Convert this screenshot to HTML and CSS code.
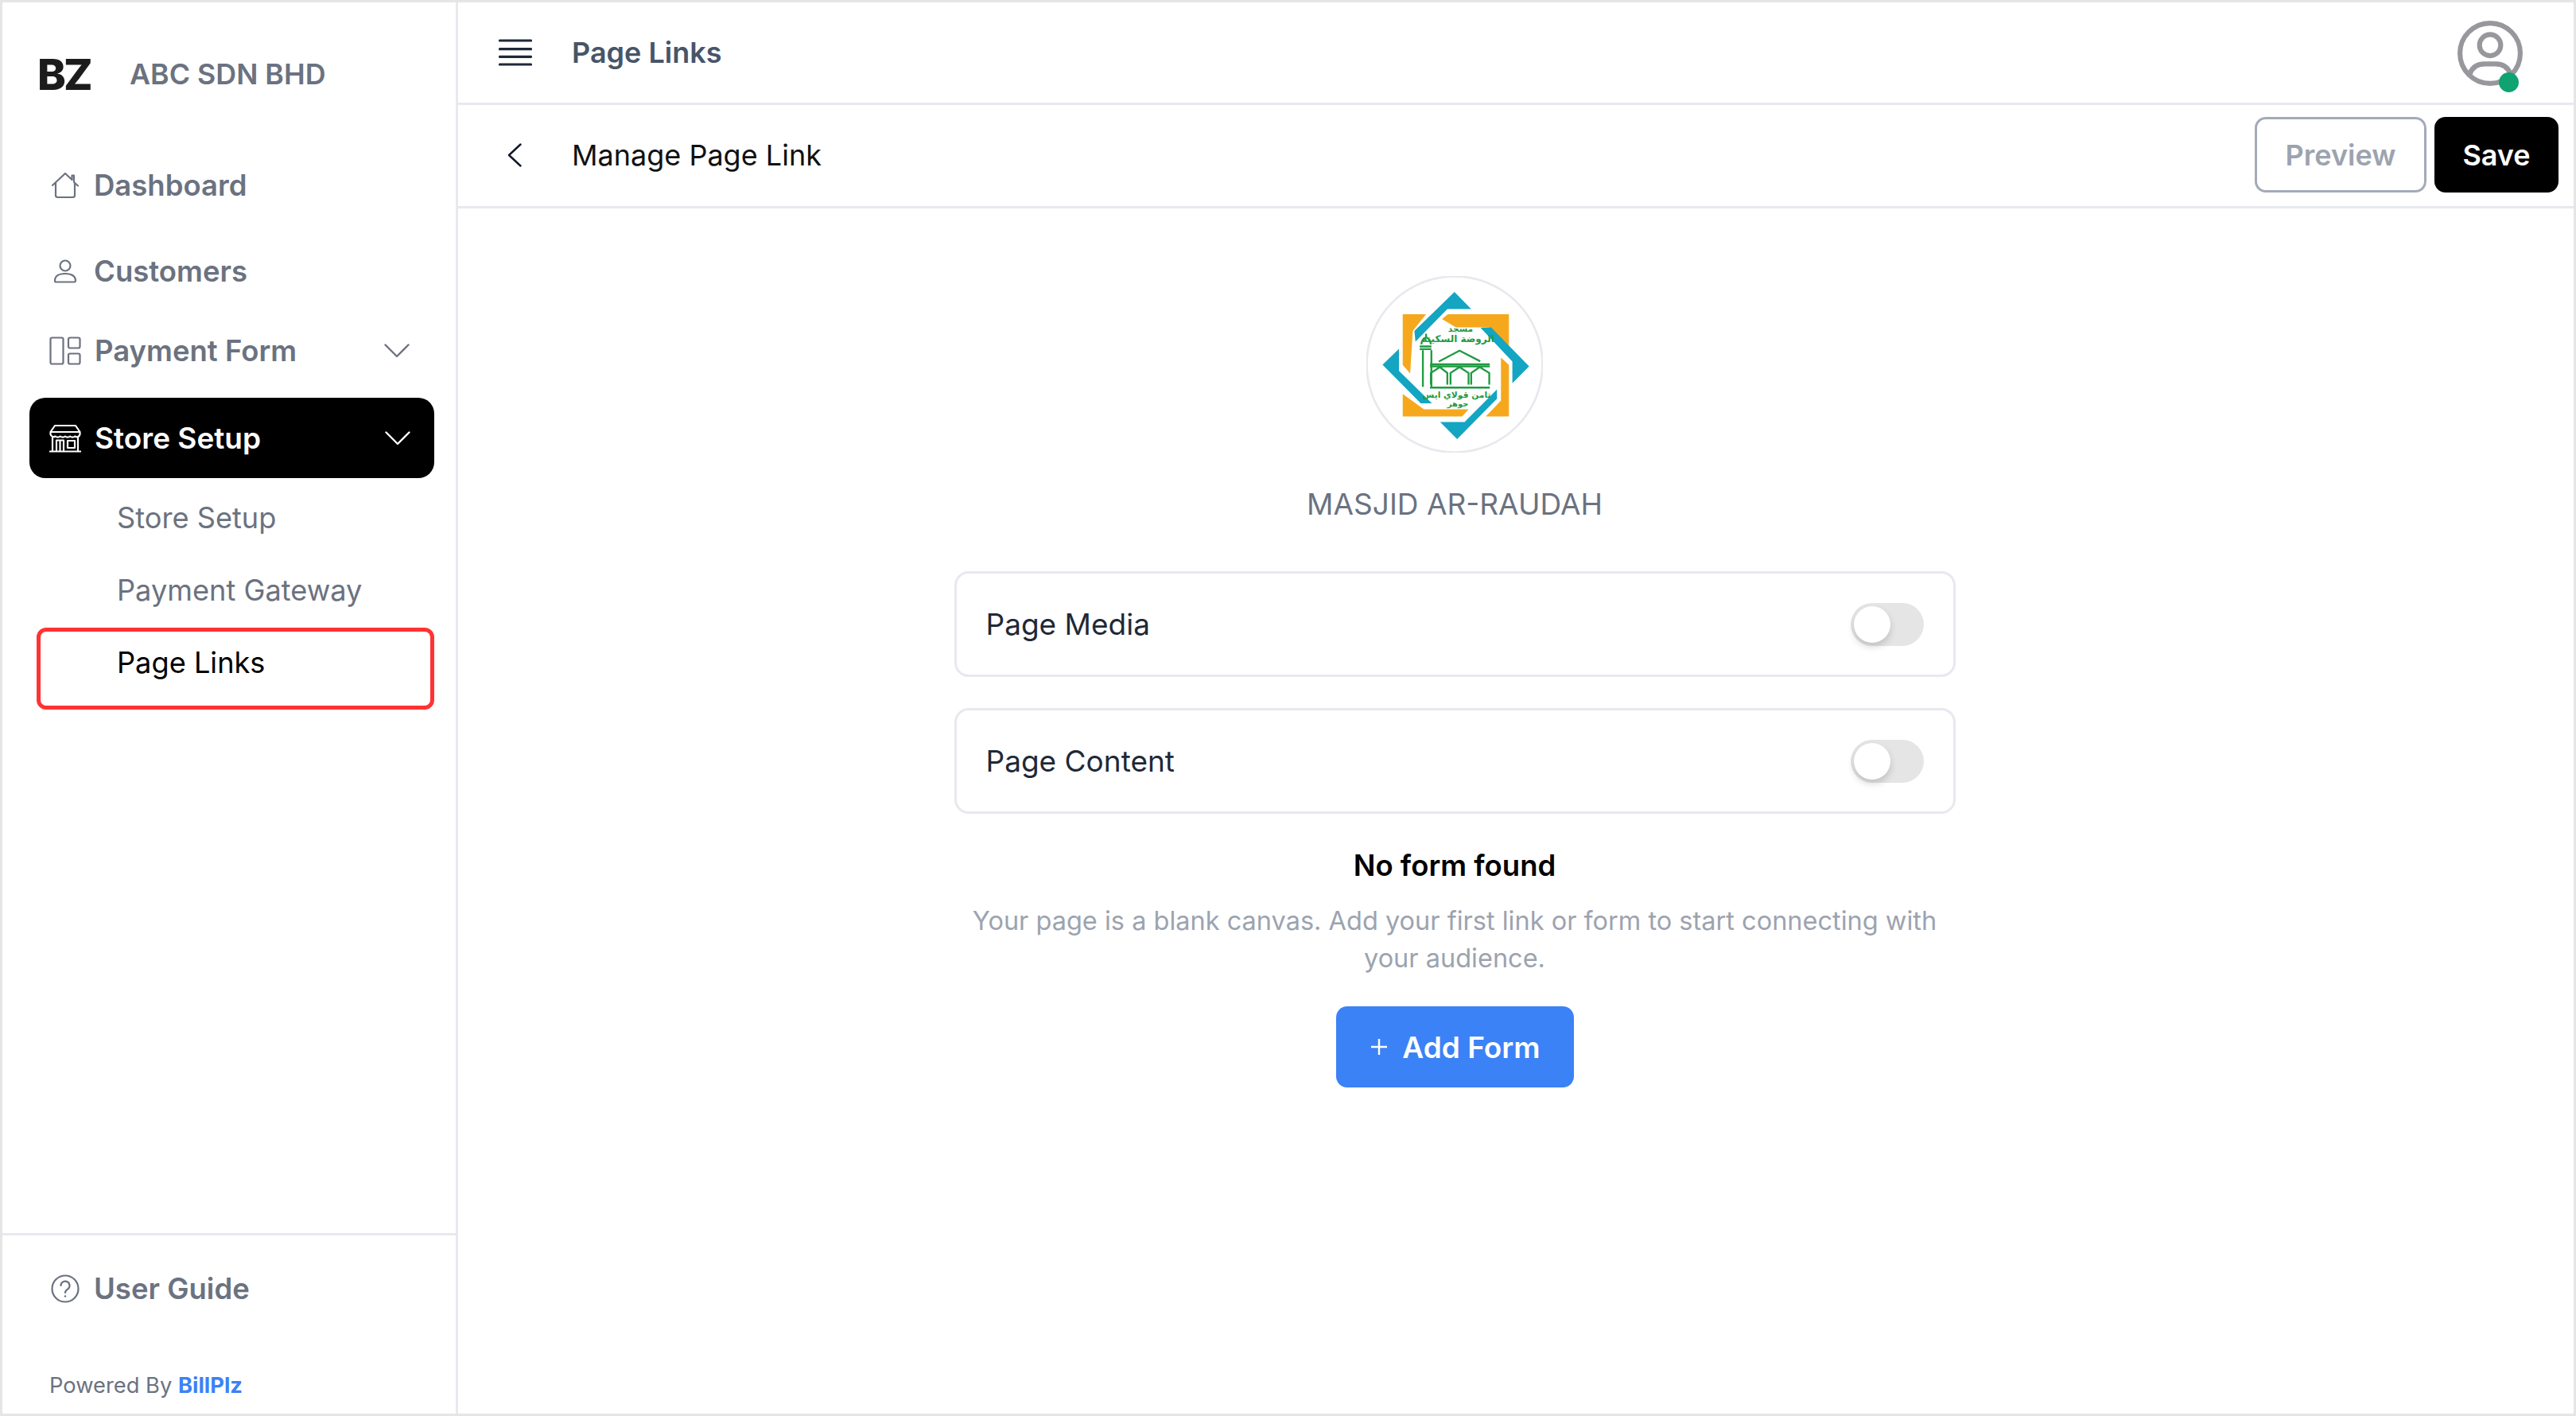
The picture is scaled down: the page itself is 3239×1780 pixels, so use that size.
FILE: index.html
```html
<!DOCTYPE html>
<html lang="en">
<head>
<meta charset="utf-8">
<title>Page Links</title>
<link rel="stylesheet" href="styles.css">
</head>
<body>
<div class="frame">
  <aside class="sidebar">
    <div class="brand"><span class="brand-mark">BZ</span><span class="brand-name">ABC SDN BHD</span></div>
    <nav class="nav">
      <a class="nav-item nav-dashboard">
        <svg class="ico" viewBox="0 0 36 36"><path d="M2 18 18 3l8.500 8V5.500h2.500v8.500L34 18.500M6 15v15.500a2.500 2.500 0 0 0 2.500 2.500h19a2.500 2.500 0 0 0 2.500-2.500V15"/></svg>
        <span>Dashboard</span>
      </a>
      <a class="nav-item nav-customers">
        <svg class="ico" viewBox="0 0 36 36"><circle cx="18" cy="11" r="6.500"/><path d="M5 30c0-6 5-9 13-9s13 3 13 9a1.500 1.500 0 0 1-1.500 1.500h-23A1.500 1.500 0 0 1 5 30z"/></svg>
        <span>Customers</span>
      </a>
      <a class="nav-item nav-form">
        <svg class="ico ico-wide" viewBox="0 0 40 36"><rect x="1.500" y="1.500" width="16" height="33" rx="2"/><rect x="24" y="1.500" width="14.500" height="13" rx="2"/><rect x="24" y="21.500" width="14.500" height="13" rx="2"/></svg>
        <span>Payment Form</span>
        <svg class="chev" viewBox="0 0 32 18"><path d="M1.500 1.500 16 16 30.500 1.500"/></svg>
      </a>
      <a class="nav-item nav-active">
        <svg class="ico ico-wide" viewBox="0 0 40 36"><path d="M7 2h26l5.500 8v3a4 4 0 0 1-6.200 2.500 5 5 0 0 1-6.200 0 5 5 0 0 1-6.100 0 5 5 0 0 1-6.200 0 5 5 0 0 1-6.200 0A4 4 0 0 1 1.500 13v-3zM1.500 10h37M4 17v17M36 17v17M0 34.500h40M9 34V20.500h9V34M13.500 20.500V34M23 21h9v9h-9z"/></svg>
        <span>Store Setup</span>
        <svg class="chev" viewBox="0 0 32 18"><path d="M1.500 1.500 16 16 30.500 1.500"/></svg>
      </a>
      <a class="sub-item sub-first">Store Setup</a>
      <a class="sub-item">Payment Gateway</a>
      <a class="sub-item sub-current">Page Links<span class="callout"></span></a>
    </nav>
    <div class="side-foot">
      <a class="nav-item guide">
        <svg class="ico" viewBox="0 0 36 36"><circle cx="18" cy="18" r="16.500"/><path d="M12.500 14a5.500 5.500 0 1 1 8.500 4.700c-2 1.300-3 2.100-3 4.300"/><circle class="dot" cx="18" cy="27.500" r="1.300"/></svg>
        <span>User Guide</span>
      </a>
      <div class="powered">Powered By <b>BillPlz</b></div>
    </div>
  </aside>
  <main class="main">
    <header class="topbar">
      <svg class="burger" viewBox="0 0 42 34"><path d="M1.500 2h39M1.500 12.700h39M1.500 22.300h39M1.500 32h39"/></svg>
      <h1 class="page-title">Page Links</h1>
      <div class="avatar">
        <svg viewBox="0 0 80 80"><circle cx="40" cy="40" r="37"/><circle cx="40" cy="30" r="13"/><path d="M15 66c3-10 10-13 18-13h14c8 0 15 3 18 13"/></svg>
        <span class="status"></span>
      </div>
    </header>
    <div class="subbar">
      <svg class="back" viewBox="0 0 20 30"><path d="M17.500 1.500 3 15l14.500 13.500"/></svg>
      <h2 class="sub-title">Manage Page Link</h2>
      <div class="actions">
        <button class="btn btn-ghost">Preview</button>
        <button class="btn btn-dark">Save</button>
      </div>
    </div>
    <section class="content">
      <svg class="org-logo" viewBox="115 83 665 665">
        <circle class="logo-bg" cx="447.500" cy="415.500" r="331"/>
        <g class="logo-orange">
          <polygon points="252,227 340,227 290,290 280,450 252,418"/>
          <polygon points="400,245 422,227 652,227 652,345 578,276 452,276"/>
          <polygon points="622,390 652,418 652,612 565,612 622,552"/>
          <polygon points="252,527 332,585 500,585 476,612 252,612"/>
        </g>
        <g class="logo-teal">
          <polygon points="447,143 510,207 420,207 300,330 296,290"/>
          <polygon points="545,278 585,276 728,423 665,487 665,405"/>
          <polygon points="607,510 607,545 457,697 393,633 485,633"/>
          <polygon points="176,417 238,357 238,440 362,562 320,562"/>
        </g>
        <g class="logo-lines">
          <path d="M328 500V362M360 500V362M316 358h44M316 348h44M340 300v14M322 340c2-16 10-24 18-26 8 2 16 10 18 26"/>
          <path d="M355 415h225M355 423h225M388 405 466 364l78 40M358 492v-44l34-22 28 22v44M432 492v-44l34-22 34 22v44M510 492v-44l32-22 36 22v44M355 503h225"/>
        </g>
        <text class="logo-ar" x="470" y="292" font-size="32">مسجد</text>
        <text class="logo-ar" x="460" y="332" font-size="36">الروضة السكينة</text>
        <text class="logo-ar" x="455" y="540" font-size="32">تامن قولاي ايس</text>
        <text class="logo-ar" x="460" y="574" font-size="30">جوهر</text>
      </svg>
      <div class="org-name">MASJID AR-RAUDAH</div>
      <div class="row-card">
        <span>Page Media</span>
        <span class="toggle"><span class="knob"></span></span>
      </div>
      <div class="row-card">
        <span>Page Content</span>
        <span class="toggle"><span class="knob"></span></span>
      </div>
      <div class="empty-title">No form found</div>
      <p class="empty-text">Your page is a blank canvas. Add your first link or form to start connecting with your audience.</p>
      <button class="btn-add">
        <svg viewBox="0 0 22 22"><path d="M11 1v20M1 11h20"/></svg>
        <span>Add Form</span>
      </button>
    </section>
  </main>
</div>
</body>
</html>
```
FILE: styles.css
```css
* { box-sizing: border-box; }
html, body { margin: 0; height: 100%; background: #fff; }
body { font-family: Inter, "Liberation Sans", sans-serif; font-size: 36.500px; color: #111827; }
.frame { width: 3239px; height: 1780px; display: flex; border: 3px solid #e5e5e5; background: #fff; }

.sidebar { width: 573px; flex: none; display: flex; flex-direction: column; border-right: 3px solid #e8e8ef; }
.brand { height: 180px; display: flex; align-items: center; padding-left: 44px; }
.brand-mark { width: 116px; font-size: 54px; font-weight: 800; color: #1c1c1c; letter-spacing: -3px; }
.brand-name { font-size: 35.800px; font-weight: 600; color: #6b7280; }

.nav { display: flex; flex-direction: column; }
.nav-item { height: 100px; display: flex; align-items: center; padding-left: 61px; font-weight: 600; color: #6b7280; }
.nav-item > span { margin-left: 18px; }
.nav-customers { margin-top: 8px; }
.ico { width: 36px; height: 36px; flex: none; fill: none; stroke: currentColor; stroke-width: 2.2; stroke-linejoin: round; stroke-linecap: round; }
.ico-wide { width: 40px; margin-left: -2px; }
.nav-item > .ico-wide + span { margin-left: 17px; }
.ico .dot { fill: currentColor; stroke: none; }
.chev { width: 32px; height: 18px; margin-left: auto; margin-right: 58px; fill: none; stroke: currentColor; stroke-width: 2.4; stroke-linecap: round; stroke-linejoin: round; }
.nav-active { height: 101px; margin: 9px 27px 0 34px; padding-left: 27px; background: #000; color: #fff; border-radius: 20px; font-size: 37px; }
.nav-active .chev { margin-right: 30px; }
.sub-item { height: 91px; display: flex; align-items: center; padding-left: 144px; font-size: 36.200px; color: #6b7280; position: relative; }
.sub-first { margin-top: 4px; }
.sub-current { color: #000; }
.callout { position: absolute; left: 43px; top: 2px; width: 500px; height: 103px; border: 5px solid #ff3333; border-radius: 12px; }

.side-foot { margin-top: auto; border-top: 3px solid #e8e8ef; height: 227px; display: flex; flex-direction: column; }
.guide { height: 134px; }
.powered { margin-top: 38px; padding-left: 59px; font-size: 27.300px; line-height: 34px; color: #6b7280; }
.powered b { color: #3b82f6; font-weight: 700; }

.main { flex: 1; min-width: 0; display: flex; flex-direction: column; }
.topbar { height: 129px; flex: none; display: flex; align-items: center; padding: 0 64px 0 51px; border-bottom: 3px solid #e8e8ef; }
.burger { width: 42px; height: 34px; flex: none; fill: none; stroke: #1e293b; stroke-width: 3.200; stroke-linecap: round; }
.page-title { margin: 0 0 0 50px; font-size: 36px; font-weight: 600; color: #475569; }
.avatar { margin-left: auto; position: relative; width: 82px; height: 82px; margin-top: 2px; }
.avatar svg { width: 82px; height: 82px; display: block; fill: none; stroke: #97979c; stroke-width: 6; }
.status { position: absolute; right: 5px; bottom: -8px; width: 25px; height: 25px; border-radius: 50%; background: #0ea371; }

.subbar { height: 130px; flex: none; display: flex; align-items: center; padding: 0 19px 2px 61px; border-bottom: 3px solid #e8e8ef; }
.back { width: 20px; height: 30px; flex: none; fill: none; stroke: #111827; stroke-width: 2.400; stroke-linecap: round; stroke-linejoin: round; }
.sub-title { margin: 0 0 0 62px; font-size: 36px; font-weight: 400; color: #111; }
.actions { margin-left: auto; display: flex; gap: 10px; }
.btn { height: 95px; font: 600 36px Inter, "Liberation Sans", sans-serif; border-radius: 14px; cursor: pointer; }
.btn-ghost { width: 216px; background: #fff; border: 3px solid #a3abb9; color: #9ca3af; }
.btn-dark { width: 156px; background: #000; border: 0; color: #fff; }

.content { flex: 1; display: flex; flex-direction: column; align-items: center; padding: 85px 154px 0 0; }
.org-logo { width: 222px; height: 222px; display: block; }
.logo-bg { fill: #fff; stroke: #e8e8ee; stroke-width: 8; }
.logo-orange { fill: #f6a81c; }
.logo-teal { fill: #13a5c1; }
.logo-lines { fill: none; stroke: #1f9a42; stroke-width: 7; }
.logo-ar { fill: #1f9a42; font-family: "DejaVu Sans", sans-serif; font-weight: 700; text-anchor: middle; direction: rtl; }
.org-name { margin-top: 43px; font-size: 37px; line-height: 44px; color: #6b7280; }
.row-card { width: 1259px; height: 133px; margin-top: 39px; display: flex; align-items: center; justify-content: space-between; padding: 0 37px; border: 3px solid #e8e8ef; border-radius: 18px; font-size: 37px; color: #1f2937; }
.org-name + .row-card { margin-top: 62px; }
.toggle { width: 92px; height: 54px; padding: 4px; background: #e5e5e5; border-radius: 27px; display: block; }
.knob { display: block; width: 46px; height: 46px; background: #fff; border-radius: 50%; box-shadow: 0 5px 10px rgba(0, 0, 0, .16); }
.empty-title { margin-top: 43px; line-height: 44px; font-weight: 600; color: #000; }
.empty-text { width: 1259px; margin: 24px 0 0; font-size: 32.500px; line-height: 47px; text-align: center; color: #9ca3af; }
.btn-add { width: 299px; height: 102px; margin-top: 37px; padding-left: 8px; display: flex; align-items: center; justify-content: center; gap: 18px; background: #3b82f6; border: 0; border-radius: 14px; color: #fff; font: 600 37px Inter, "Liberation Sans", sans-serif; }
.btn-add svg { width: 22px; height: 22px; fill: none; stroke: #fff; stroke-width: 2.400; }
```
